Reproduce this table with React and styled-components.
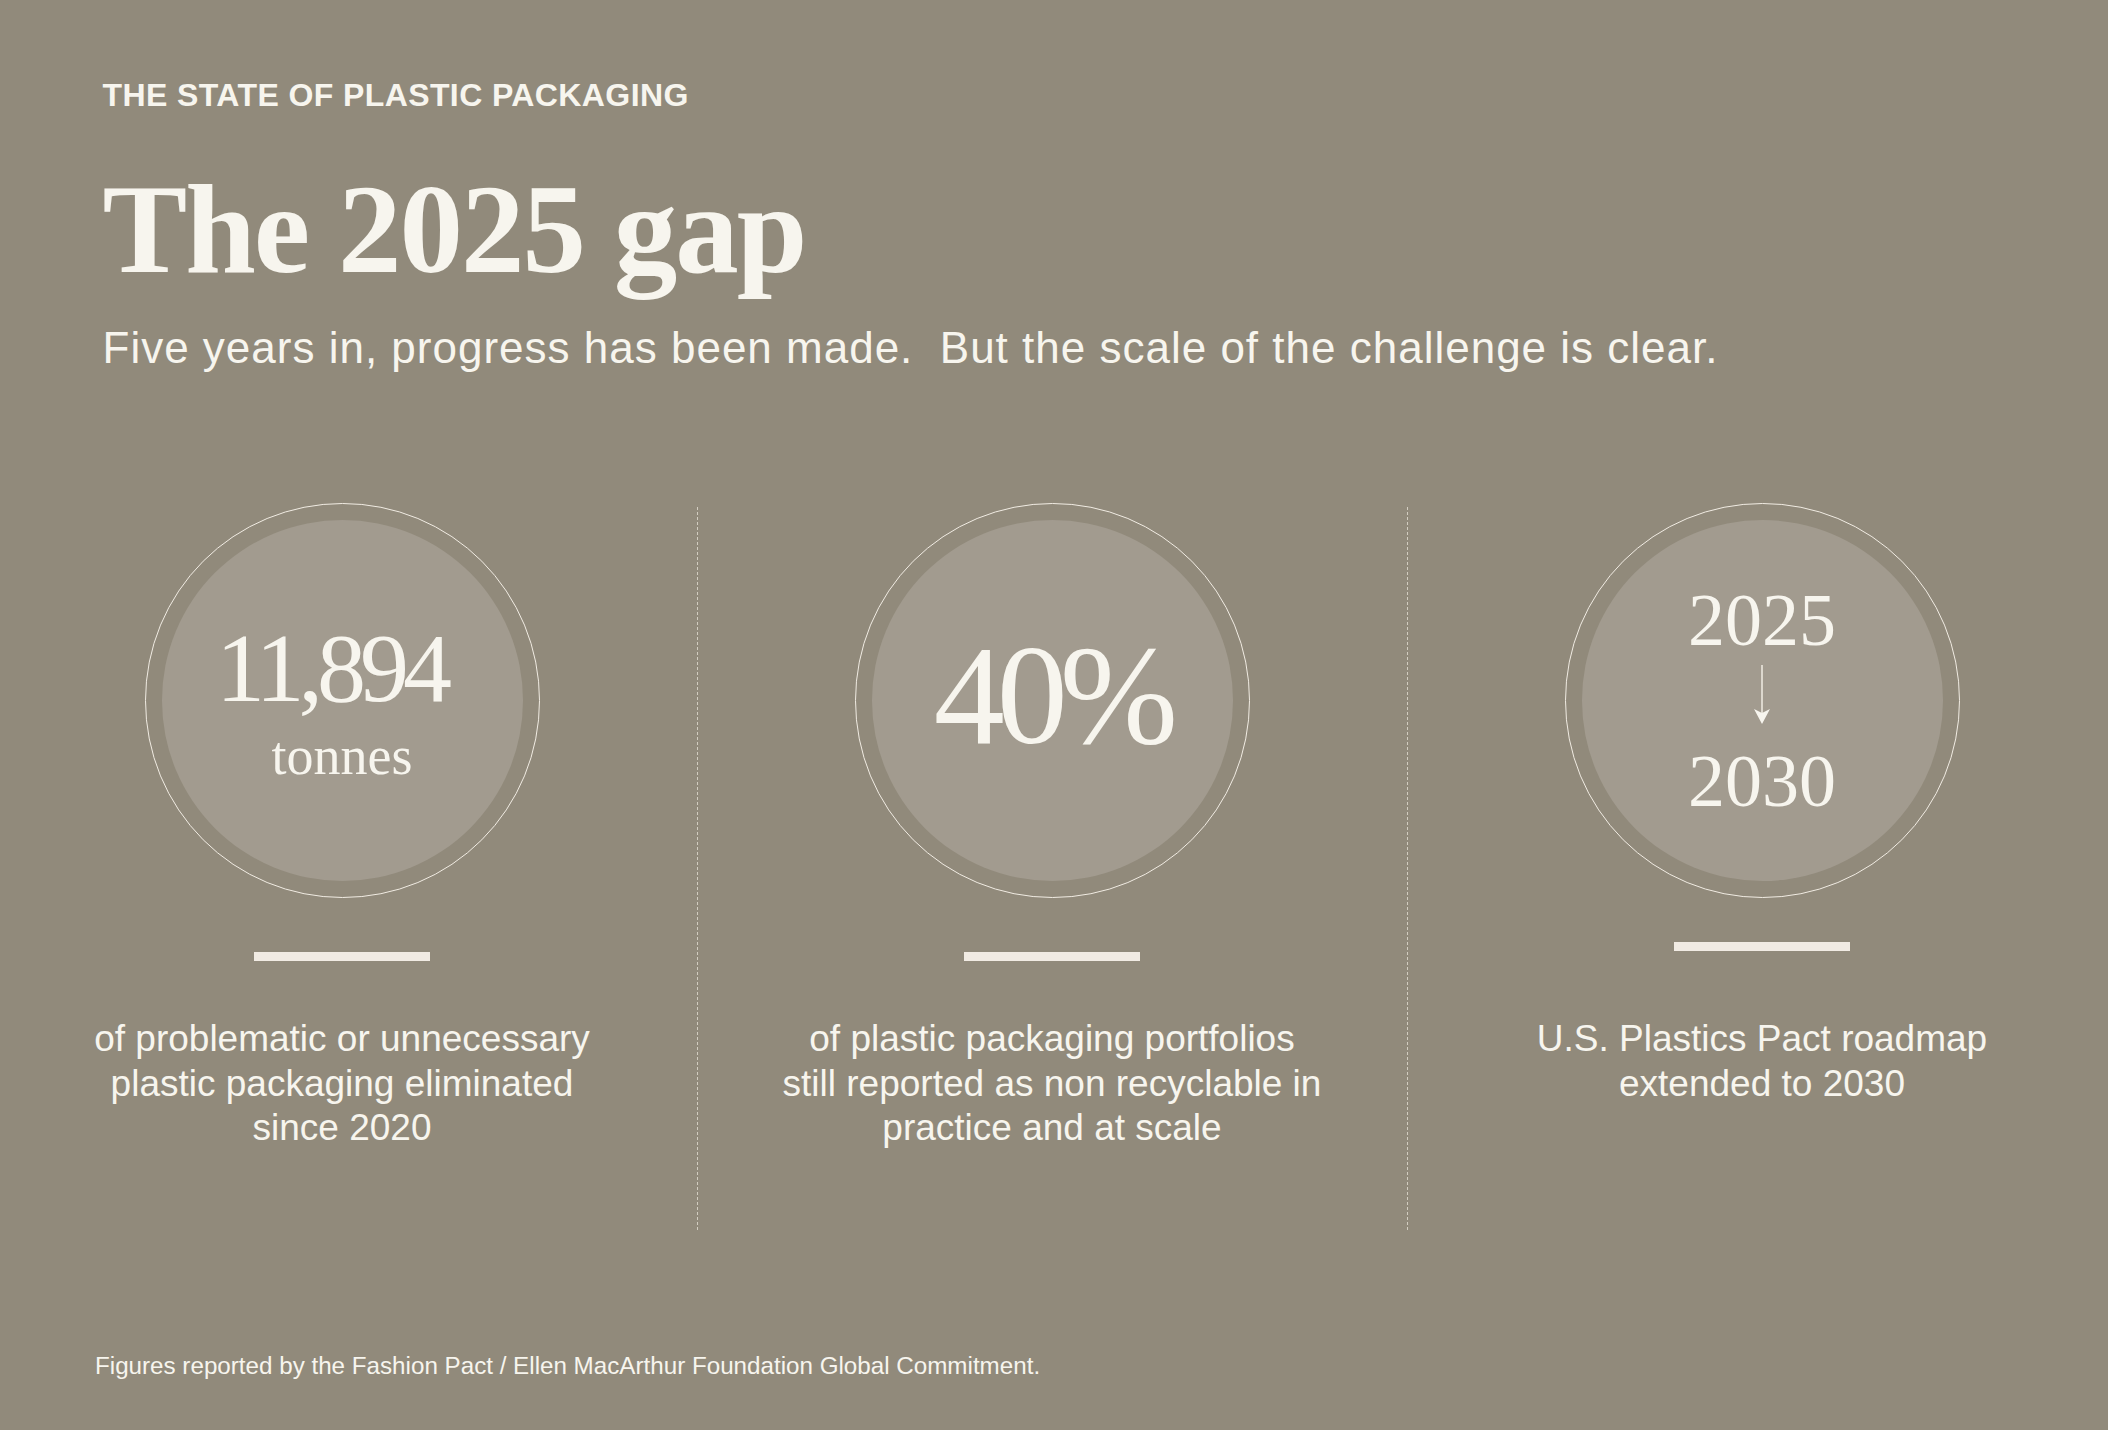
import styled, { createGlobalStyle } from "styled-components";

const GlobalStyle = createGlobalStyle`
  html, body {
    margin: 0;
    padding: 0;
    background: #918a7b;
  }
  * {
    box-sizing: border-box;
  }
`;

const Page = styled.main`
  width: 2108px;
  height: 1430px;
  padding: 79px 104px 0 102.5px;
  background: #918a7b;
  color: #f7f5ee;
  font-family: "Liberation Sans", Arial, sans-serif;
  display: flex;
  flex-direction: column;
  overflow: hidden;
`;

const Eyebrow = styled.div`
  font-size: 32px;
  line-height: 1;
  font-weight: 700;
  letter-spacing: 0.4px;
  text-transform: uppercase;
`;

const Title = styled.h1`
  margin: 55px 0 0;
  font-family: "Liberation Serif", "Times New Roman", serif;
  font-size: 127px;
  line-height: 1;
  font-weight: 700;
  letter-spacing: -2px;
`;

const Lede = styled.p`
  margin: 33px 0 0;
  font-size: 44px;
  line-height: 1;
  font-weight: 400;
  letter-spacing: 1px;
`;

const Stats = styled.section`
  margin: 133px 0 0 -0.5px;
  height: 727px;
  display: grid;
  grid-template-columns: 480px 1px 480px 1px 480px;
  column-gap: 114.5px;
`;

const Divider = styled.div`
  margin-top: 4px;
  border-left: 1px dashed rgba(240, 234, 224, 0.7);
`;

const Stat = styled.div`
  display: flex;
  flex-direction: column;
  align-items: center;
`;

const Ring = styled.div`
  width: 395px;
  height: 395px;
  flex: none;
  padding: 16px;
  border: 1px solid #f1ece3;
  border-radius: 50%;
`;

const Disc = styled.div`
  width: 100%;
  height: 100%;
  border-radius: 50%;
  background: #a29b8f;
  display: flex;
  flex-direction: column;
  align-items: center;
  justify-content: center;
  font-family: "Liberation Serif", "Times New Roman", serif;
  font-weight: 400;
  line-height: 1;
`;

const Figure = styled.div`
  font-size: ${(p) => p.$size}px;
  letter-spacing: ${(p) => p.$track || 0}px;
  margin-bottom: ${(p) => p.$drop || 0}px;
  margin-right: ${(p) => p.$nudge || 0}px;
`;

const Unit = styled.div`
  margin-top: 12px;
  font-size: 54px;
`;

const Arrow = styled.svg`
  display: block;
  margin: 8px 0 19px;
`;

const Bar = styled.div`
  width: 176px;
  height: 9px;
  flex: none;
  background: #f1ebe3;
  margin-top: ${(p) => (p.$lift ? 44 : 54)}px;
  margin-bottom: ${(p) => (p.$lift ? 66 : 56)}px;
`;

const Caption = styled.p`
  margin: 0;
  white-space: nowrap;
  font-size: 37px;
  line-height: 44.5px;
  text-align: center;
`;

const Footnote = styled.p`
  margin: 124px 0 0 -7.5px;
  font-size: 24.2px;
  line-height: 1;
`;

function DownArrow() {
  return (
    <Arrow width="18" height="60" viewBox="0 0 18 60">
      <line x1="9" y1="0" x2="9" y2="50" stroke="#ece7de" strokeWidth="1.6" />
      <path d="M1 44 L9 59 L17 44 L9 48 Z" fill="#f7f5ee" />
    </Arrow>
  );
}

export default function App() {
  return (
    <>
      <GlobalStyle />
      <Page>
        <Eyebrow>The state of plastic packaging</Eyebrow>
        <Title>The 2025 gap</Title>
        <Lede>
          Five years in, progress has been made.{"\u00A0"} But the scale of the
          challenge is clear.
        </Lede>

        <Stats>
          <Stat>
            <Ring>
              <Disc>
                <Figure $size={98} $track={-6} $nudge={22}>
                  11,894
                </Figure>
                <Unit>tonnes</Unit>
              </Disc>
            </Ring>
            <Bar />
            <Caption>
              of problematic or unnecessary
              <br />
              plastic packaging eliminated
              <br />
              since 2020
            </Caption>
          </Stat>

          <Divider />

          <Stat>
            <Ring>
              <Disc>
                <Figure $size={142} $track={-8} $drop={11}>
                  40%
                </Figure>
              </Disc>
            </Ring>
            <Bar />
            <Caption>
              of plastic packaging portfolios
              <br />
              still reported as non recyclable in
              <br />
              practice and at scale
            </Caption>
          </Stat>

          <Divider />

          <Stat>
            <Ring>
              <Disc>
                <Figure $size={74}>2025</Figure>
                <DownArrow />
                <Figure $size={74}>2030</Figure>
              </Disc>
            </Ring>
            <Bar $lift />
            <Caption>
              U.S. Plastics Pact roadmap
              <br />
              extended to 2030
            </Caption>
          </Stat>
        </Stats>

        <Footnote>
          Figures reported by the Fashion Pact / Ellen MacArthur Foundation
          Global Commitment.
        </Footnote>
      </Page>
    </>
  );
}
